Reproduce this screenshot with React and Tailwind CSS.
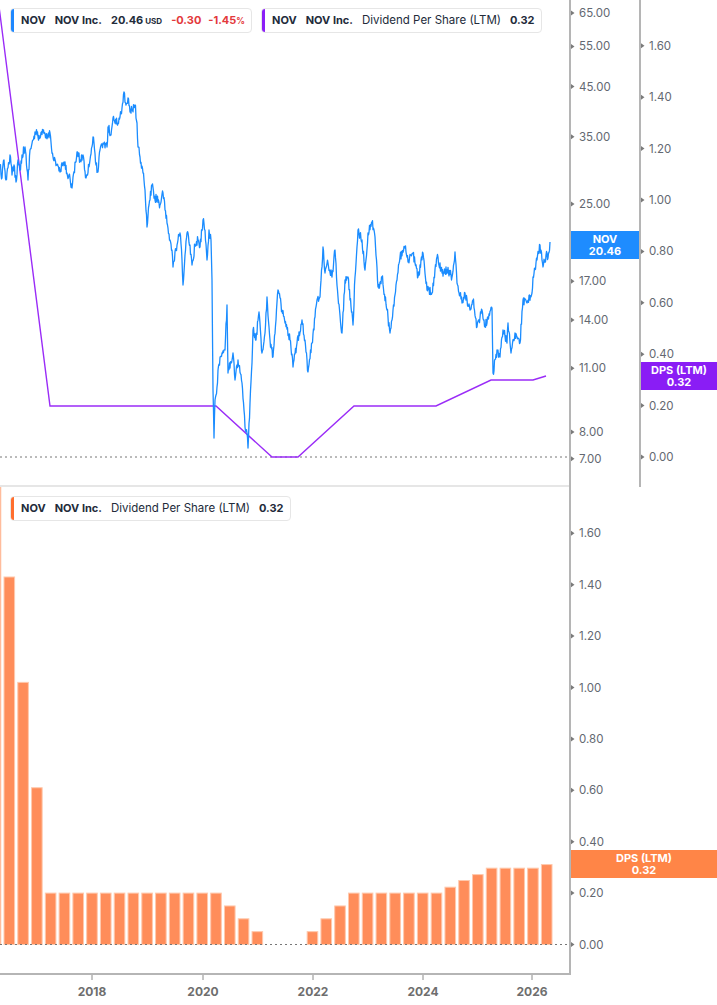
import React from "react";

// price keypoints (page coords), jittered below to get the jagged daily look
const KP = [
  [0,165],[2,178],[4,160],[6,180],[8,168],[10,155],[12,175],[14,165],[16,182],[18,160],[20,170],[22,155],[25,147],[28,180],[30,150],[33,140],[36,133],[40,138],[43,132],[46,138],[50,133],[53,157],[57,165],[60,172],[64,162],[67,173],[70,178],[72,188],[77,152],[80,160],[83,155],[86,178],[90,160],[93,137],[96,165],[98,172],[100,150],[104,143],[107,147],[108,127],[111,135],[113,118],[117,123],[120,117],[122,108],[124,92],[126,105],[128,98],[130,112],[132,110],[135,105],[137,123],[138,147],[140,157],[143,173],[145,190],[147,227],[149,205],[152,185],[155,200],[157,197],[160,205],[163,193],[165,210],[167,223],[170,240],[172,250],[173,267],[176,250],[178,240],[180,233],[182,260],[183,285],[185,255],[187,233],[190,245],[192,265],[195,245],[198,240],[200,247],[203,220],[205,230],[207,260],[209,230],[211,240],[212,280],[213,390],[214,438],[215,400],[217,387],[218,370],[222,353],[225,350],[227,305],[228,373],[233,353],[235,380],[238,360],[242,383],[245,427],[247,433],[248,448],[250,403],[252,363],[253,330],[256,340],[259,312],[262,353],[265,333],[267,297],[270,340],[273,357],[278,290],[282,310],[285,323],[290,340],[293,367],[297,343],[302,320],[305,340],[308,372],[312,343],[315,317],[317,300],[320,297],[323,247],[325,273],[328,263],[332,277],[335,250],[338,297],[342,333],[345,280],[348,277],[353,325],[355,277],[358,230],[362,240],[365,270],[368,233],[372,222],[375,237],[378,287],[382,277],[387,310],[390,333],[393,310],[397,280],[400,257],[405,248],[408,262],[413,253],[418,277],[423,253],[427,290],[432,293],[437,257],[442,273],[447,270],[452,277],[455,252],[457,283],[462,303],[465,293],[470,310],[473,300],[477,327],[482,310],[485,327],[488,317],[492,308],[493,373],[497,350],[500,357],[503,330],[507,343],[508,323],[511,353],[515,333],[520,343],[523,300],[527,303],[532,293],[533,277],[537,260],[540,245],[543,267],[547,253],[548,258],[550,242],
];

function buildPrice() {
  let s = 12345;
  const r = () => (s = (s * 16807) % 2147483647) / 2147483647;
  const pts = [];
  for (let i = 0; i < KP.length - 1; i++) {
    const [x1, y1] = KP[i];
    const [x2, y2] = KP[i + 1];
    const n = Math.max(1, Math.round((x2 - x1) / 0.5));
    for (let k = 0; k < n; k++) {
      const t = k / n;
      const jit = k === 0 ? 0 : (r() - 0.5) * 9;
      pts.push(`${(x1 + (x2 - x1) * t).toFixed(1)},${(y1 + (y2 - y1) * t + jit).toFixed(1)}`);
    }
  }
  const last = KP[KP.length - 1];
  pts.push(`${last[0]},${last[1]}`);
  return pts.join(" ");
}

const PRICE_PTS = buildPrice();

const DPS_PTS = "-2,0 0,14 50,406 216,406 272,457 298,457 354,406 436,406 491,380 533,380 546,376";

// quarterly DPS (LTM) bars, index -1 is the clipped one at the left edge
const BARS = [
  2.0, 1.43, 1.02, 0.61,
  0.2, 0.2, 0.2, 0.2, 0.2, 0.2, 0.2, 0.2, 0.2, 0.2, 0.2, 0.2, 0.2,
  0.15, 0.1, 0.05, 0, 0, 0, 0.05, 0.1, 0.15,
  0.2, 0.2, 0.2, 0.2, 0.2, 0.2, 0.2,
  0.223, 0.249, 0.272, 0.297, 0.297, 0.297, 0.297, 0.311,
];

const priceY = (p) => 13 + (Math.log(65) - Math.log(p)) * 200;
const PRICE_TICKS = [65, 55, 45, 35, 25, 17, 14, 11, 8, 7];
const DPS_TICKS = [1.6, 1.4, 1.2, 1.0, 0.8, 0.6, 0.4, 0.2, 0];
const YEARS = [
  ["2018", 92],
  ["2020", 203],
  ["2022", 313],
  ["2024", 423],
  ["2026", 532],
];

const Tick = ({ y }) => <polygon points={`0,${y - 2.5} 3.5,${y} 0,${y + 2.5}`} fill="#7a7a7a" />;

const AxisLabels = ({ ticks, yOf, fmt }) => (
  <svg className="absolute inset-0 w-full h-full overflow-visible">
    {ticks.map((t) => (
      <g key={t}>
        <Tick y={yOf(t)} />
        <text x="8" y={yOf(t)} dominantBaseline="central" fontSize="11.5" fill="#636871">
          {fmt(t)}
        </text>
      </g>
    ))}
  </svg>
);

const Legend = ({ color, children }) => (
  <div className="flex items-center h-[25px] bg-white border border-[#e6e6e6] rounded-[4px] overflow-hidden pr-[6px] text-[11px] text-[#232b3a] whitespace-nowrap">
    <div className="w-[3px] h-full mr-[7px]" style={{ backgroundColor: color }} />
    <div className="flex items-baseline gap-[9px]">{children}</div>
  </div>
);

const Badge = ({ color, top, label, value }) => (
  <div
    className="absolute left-0 right-0 h-[28px] flex flex-col items-center justify-center text-white font-bold text-[11px] leading-[12px]"
    style={{ top, backgroundColor: color }}
  >
    <span>{label}</span>
    <span>{value}</span>
  </div>
);

export default function App() {
  return (
    <div className="w-[717px] h-[1005px] bg-white flex flex-col font-['Inter',sans-serif] overflow-hidden">
      {/* top panel: price + DPS line */}
      <div className="flex h-[487px]">
        <div className="relative w-[569px] border-b-2 border-[#e6e6e6]">
          <svg className="absolute inset-0 w-full h-full">
            <line x1="0" y1="457" x2="569" y2="457" stroke="#777" strokeWidth="1" strokeDasharray="2 3" />
            <polyline points={DPS_PTS} fill="none" stroke="#9a2cf7" strokeWidth="1.4" />
            <polyline points={PRICE_PTS} fill="none" stroke="#1a8cff" strokeWidth="1.3" strokeLinejoin="round" />
          </svg>
          <div className="absolute left-[10px] top-[8px] flex gap-[9px]">
            <Legend color="#1e88ff">
              <span className="font-bold">NOV</span>
              <span className="font-bold">NOV Inc.</span>
              <span className="font-bold">
                20.46<span className="text-[8px] ml-[2px]">USD</span>
              </span>
              <span className="font-bold text-[#e3393c]">-0.30</span>
              <span className="font-bold text-[#e3393c] -ml-[2px]">
                -1.45<span className="text-[8.5px]">%</span>
              </span>
            </Legend>
            <Legend color="#8b1ef7">
              <span className="font-bold">NOV</span>
              <span className="font-bold">NOV Inc.</span>
              <span className="text-[11.5px]">Dividend Per Share (LTM)</span>
              <span className="font-bold">0.32</span>
            </Legend>
          </div>
        </div>
        <div className="relative w-[70px] border-l-2 border-[#b5b5b5]">
          <AxisLabels ticks={PRICE_TICKS} yOf={priceY} fmt={(t) => t.toFixed(2)} />
          <Badge color="#1e8cff" top="231px" label="NOV" value="20.46" />
        </div>
        <div className="relative flex-1 border-l-2 border-[#b5b5b5]">
          <AxisLabels ticks={DPS_TICKS} yOf={(v) => 457 - v * 257} fmt={(t) => t.toFixed(2)} />
          <Badge color="#8a1df5" top="362px" label="DPS (LTM)" value="0.32" />
        </div>
      </div>

      {/* bottom panel: DPS bars */}
      <div className="flex h-[488px]">
        <div className="relative w-[569px] border-b-2 border-[#b5b5b5]">
          <svg className="absolute inset-0 w-full h-full">
            {BARS.map((v, i) => {
              const h = v * 257;
              if (h <= 0) return null;
              const x = 4 + (i - 1) * 13.78;
              return (
                <rect
                  key={i}
                  x={x}
                  y={457.5 - h}
                  width="10.6"
                  height={h}
                  fill="#ff8d5a"
                  stroke="#ffc9ad"
                  strokeWidth="1"
                />
              );
            })}
            <line x1="0" y1="457.5" x2="569" y2="457.5" stroke="#777" strokeWidth="1" strokeDasharray="2 3" />
          </svg>
          <div className="absolute left-[10px] top-[9px]">
            <Legend color="#ff6e2e">
              <span className="font-bold">NOV</span>
              <span className="font-bold">NOV Inc.</span>
              <span className="text-[11.5px]">Dividend Per Share (LTM)</span>
              <span className="font-bold">0.32</span>
            </Legend>
          </div>
        </div>
        <div className="relative flex-1 border-l-2 border-[#b5b5b5]">
          <AxisLabels ticks={DPS_TICKS} yOf={(v) => 457.5 - v * 257} fmt={(t) => t.toFixed(2)} />
          <Badge color="#ff8547" top="363px" label="DPS (LTM)" value="0.32" />
        </div>
      </div>

      {/* time axis */}
      <div className="relative h-[30px] w-[569px]">
        <svg className="absolute inset-0 w-full h-full">
          {YEARS.map(([label, x]) => (
            <g key={label}>
              <line x1={x} y1="0" x2={x} y2="5" stroke="#8a8a8a" strokeWidth="1" />
              <text x={x} y="16" textAnchor="middle" dominantBaseline="central" fontSize="12" fontWeight="700" fill="#6e6e6e">
                {label}
              </text>
            </g>
          ))}
        </svg>
      </div>
    </div>
  );
}
